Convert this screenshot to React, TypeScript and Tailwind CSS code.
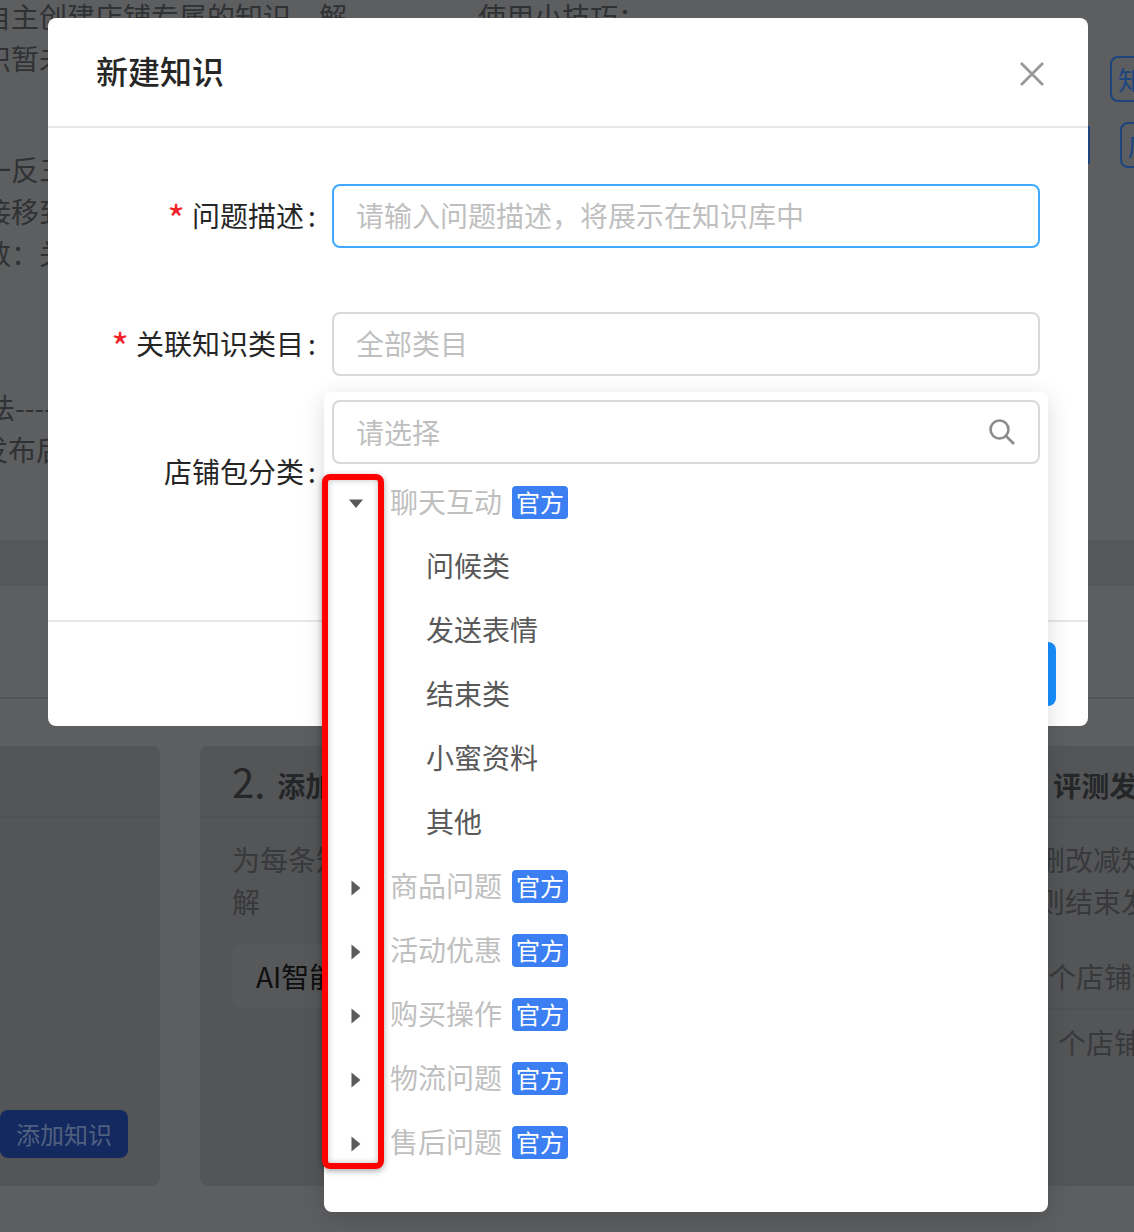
const TREE = [
  { name: '聊天互动', open: true, children: ['问候类', '发送表情', '结束类', '小蜜资料', '其他'] },
  { name: '商品问题' },
  { name: '活动优惠' },
  { name: '购买操作' },
  { name: '物流问题' },
  { name: '售后问题' },
];

function PageBehind() {
  return (
    <div className="h-[1232px] overflow-hidden bg-[#5d5e60] text-[28px] leading-[42px] text-[#303133]">
      <div className="flex h-[540px]">
        <div className="-ml-[17px] w-[495px] shrink-0 -mt-[5px]">
          <p className="whitespace-nowrap">自主创建店铺专属的知识，解</p>
          <p className="-ml-[28px] whitespace-nowrap">知识暂未配置</p>
          <div className="mt-[69px]">
            <p className="-ml-[28px] whitespace-nowrap">举一反三</p>
            <p className="-ml-[28px] whitespace-nowrap">直接移到</p>
            <p className="whitespace-nowrap">数：关联</p>
          </div>
          <div className="mt-[112px]">
            <p className="ml-[4px] whitespace-nowrap">法------</p>
            <p className="-ml-[3px] whitespace-nowrap">发布后</p>
          </div>
        </div>
        <div className="-mt-[5px] whitespace-nowrap">使用小技巧：</div>
        <div className="ml-auto w-[46px] shrink-0 text-[#1c4580]">
          <div className="ml-[22px] mt-[56px] flex h-[46px] w-[60px] items-center rounded-lg border-2 border-[#1c4580] pl-[6px] text-[26px]">知</div>
          <div className="mt-[20px] flex items-center">
            <div className="h-[38px] w-[2px] shrink-0 bg-[#1c4580]" />
            <div className="ml-[30px] flex h-[46px] w-[60px] shrink-0 items-center rounded-lg border-2 border-[#1c4580] pl-[6px] text-[26px]">店</div>
          </div>
        </div>
      </div>
      <div className="h-[46px] bg-[#565759]" />
      <div className="h-[113px] border-b-2 border-[#525355]" />
      <div className="mt-[47px] flex gap-[40px] -ml-[40px]">
        <div className="flex h-[440px] w-[200px] shrink-0 flex-col rounded-lg bg-[#545557]">
          <div className="h-[72px] border-b-2 border-[#505153]" />
          <div className="mt-auto mb-[28px] ml-[40px] flex h-[48px] w-[128px] items-center justify-center rounded-lg bg-[#14295f] text-[24px] text-[#50607f]">添加知识</div>
        </div>
        <div className="h-[440px] w-[738px] shrink-0 rounded-lg bg-[#545557]">
          <div className="flex h-[72px] items-center border-b-2 border-[#505153] pl-[32px] text-[#252628]">
            <span className="text-[40px] leading-none">2.</span>
            <span className="ml-[12px] mt-[8px] text-[28px] font-bold">添加知识答案</span>
          </div>
          <div className="px-[32px] pt-[20px]">
            <p className="text-[#38393b]">为每条知识添加答案，让小蜜更好的理</p>
            <p className="text-[#38393b]">解</p>
            <div className="mt-[22px] flex h-[64px] items-center rounded-lg bg-[#57585a] px-[24px] text-[#0f0f10]">AI智能生成答案</div>
          </div>
        </div>
        <div className="h-[440px] w-[300px] shrink-0 rounded-lg bg-[#545557]">
          <div className="flex h-[72px] items-center border-b-2 border-[#505153] pl-[32px] text-[#252628]">
            <span className="text-[40px] leading-none">3.</span>
            <span className="ml-[10px] mt-[8px] text-[28px] font-bold">评测发布</span>
          </div>
          <div className="pt-[20px]">
            <p className="whitespace-nowrap pl-[31px] text-[#38393b]">增删改减知识</p>
            <p className="whitespace-nowrap pl-[31px] text-[#38393b]">规则结束发布</p>
            <div className="mt-[22px] flex h-[66px] items-center whitespace-nowrap border-b-2 border-[#505153] pl-[70px] text-[#38393b]">个店铺使用</div>
            <div className="flex h-[64px] items-center whitespace-nowrap pl-[80px] text-[#38393b]">个店铺使用</div>
          </div>
        </div>
      </div>
    </div>
  );
}

function FormRow({ label, required, children }: { label: string; required?: boolean; children?: React.ReactNode }) {
  return (
    <div className="flex h-[64px] items-center">
      <div className="flex w-[252px] shrink-0 items-center justify-end pb-[2px] text-[28px] text-[#262626]">
        {required && <span className="mr-[7px] mt-[6px] text-[38px] leading-[42px] text-[#f5222d]">*</span>}
        <span>{label}</span>
        <span className="ml-[4px] mr-[-2px] w-[10px]">:</span>
      </div>
      <div className="ml-[16px] flex-1">{children}</div>
    </div>
  );
}

function Modal() {
  return (
    <div className="absolute left-[48px] top-[18px] flex h-[708px] w-[1040px] flex-col rounded-lg bg-white">
      <div className="flex h-[110px] shrink-0 items-center justify-between border-b-2 border-[#e8e8e8] pl-[48px] pr-[44px]">
        <span className="mb-[4px] text-[32px] font-medium text-[#262626]">新建知识</span>
        <svg width="24" height="24" viewBox="0 0 24 24" className="mt-[3px]">
          <path d="M1 1 L23 23 M23 1 L1 23" stroke="#999" strokeWidth="2.8" fill="none" />
        </svg>
      </div>
      <div className="flex flex-1 flex-col gap-[64px] pl-[16px] pr-[48px] pt-[56px]">
        <FormRow label="问题描述" required>
          <div className="flex h-[64px] items-center rounded-lg border-2 border-[#40a9ff] px-[22px] pb-[2px] text-[28px] text-[#bfbfbf]">
            请输入问题描述，将展示在知识库中
          </div>
        </FormRow>
        <FormRow label="关联知识类目" required>
          <div className="flex h-[64px] items-center rounded-lg border-2 border-[#d9d9d9] px-[22px] pb-[2px] text-[28px] text-[#bfbfbf]">
            全部类目
          </div>
        </FormRow>
        <FormRow label="店铺包分类" />
      </div>
      <div className="flex h-[106px] shrink-0 justify-end border-t-2 border-[#e8e8e8] pr-[32px] pt-[20px]">
        <div className="h-[64px] w-[120px] rounded-lg bg-[#1890ff]" />
      </div>
    </div>
  );
}

function Caret({ open }: { open?: boolean }) {
  return (
    <svg width="16" height="16" viewBox="0 0 16 16" className="mt-[3px]">
      <path d={open ? 'M1 3.5 H15 L8 12 Z' : 'M3.5 0.5 L12.5 8 L3.5 15.5 Z'} fill="#595959" />
    </svg>
  );
}

function TreeDropdown() {
  return (
    <div className="absolute left-[324px] top-[392px] h-[820px] w-[724px] rounded-lg bg-white p-[8px] shadow-[0_6px_24px_rgba(0,0,0,0.14)]">
      <div className="flex h-[64px] items-center justify-between rounded-lg border-2 border-[#d9d9d9] pl-[22px] pr-[22px] text-[28px] text-[#bfbfbf]">
        <span>请选择</span>
        <svg width="28" height="28" viewBox="0 0 28 28">
          <circle cx="11.5" cy="11.5" r="9" stroke="#8c8c8c" strokeWidth="2.6" fill="none" />
          <path d="M18 18 L26 26" stroke="#8c8c8c" strokeWidth="2.6" fill="none" />
        </svg>
      </div>
      <div className="pt-[6px]">
        {TREE.map((node) => (
          <div key={node.name}>
            <div className="flex h-[64px] items-center">
              <div className="flex w-[48px] justify-center"><Caret open={node.open} /></div>
              <span className="mb-[2px] ml-[10px] text-[28px] text-[#bfbfbf]">{node.name}</span>
              <span className="ml-[10px] flex h-[33px] w-[56px] items-center justify-center rounded bg-[#3b7ff2] text-[24px] leading-none text-white">官方</span>
            </div>
            {node.children?.map((child) => (
              <div key={child} className="flex h-[64px] items-center pb-[2px] pl-[94px] text-[28px] text-[#595959]">{child}</div>
            ))}
          </div>
        ))}
      </div>
    </div>
  );
}

export default function App() {
  return (
    <div className="relative h-[1232px] w-[1134px] overflow-hidden font-['Noto_Sans_CJK_SC','Noto_Sans',sans-serif]">
      <PageBehind />
      <Modal />
      <TreeDropdown />
      {/* red annotation over the expand arrows */}
      <div className="absolute left-[322px] top-[474px] h-[695px] w-[62px] rounded-lg border-[6px] border-[#fe0000] shadow-[0_2px_6px_rgba(0,0,0,0.35),inset_0_0_6px_rgba(0,0,0,0.25)]" />
    </div>
  );
}
